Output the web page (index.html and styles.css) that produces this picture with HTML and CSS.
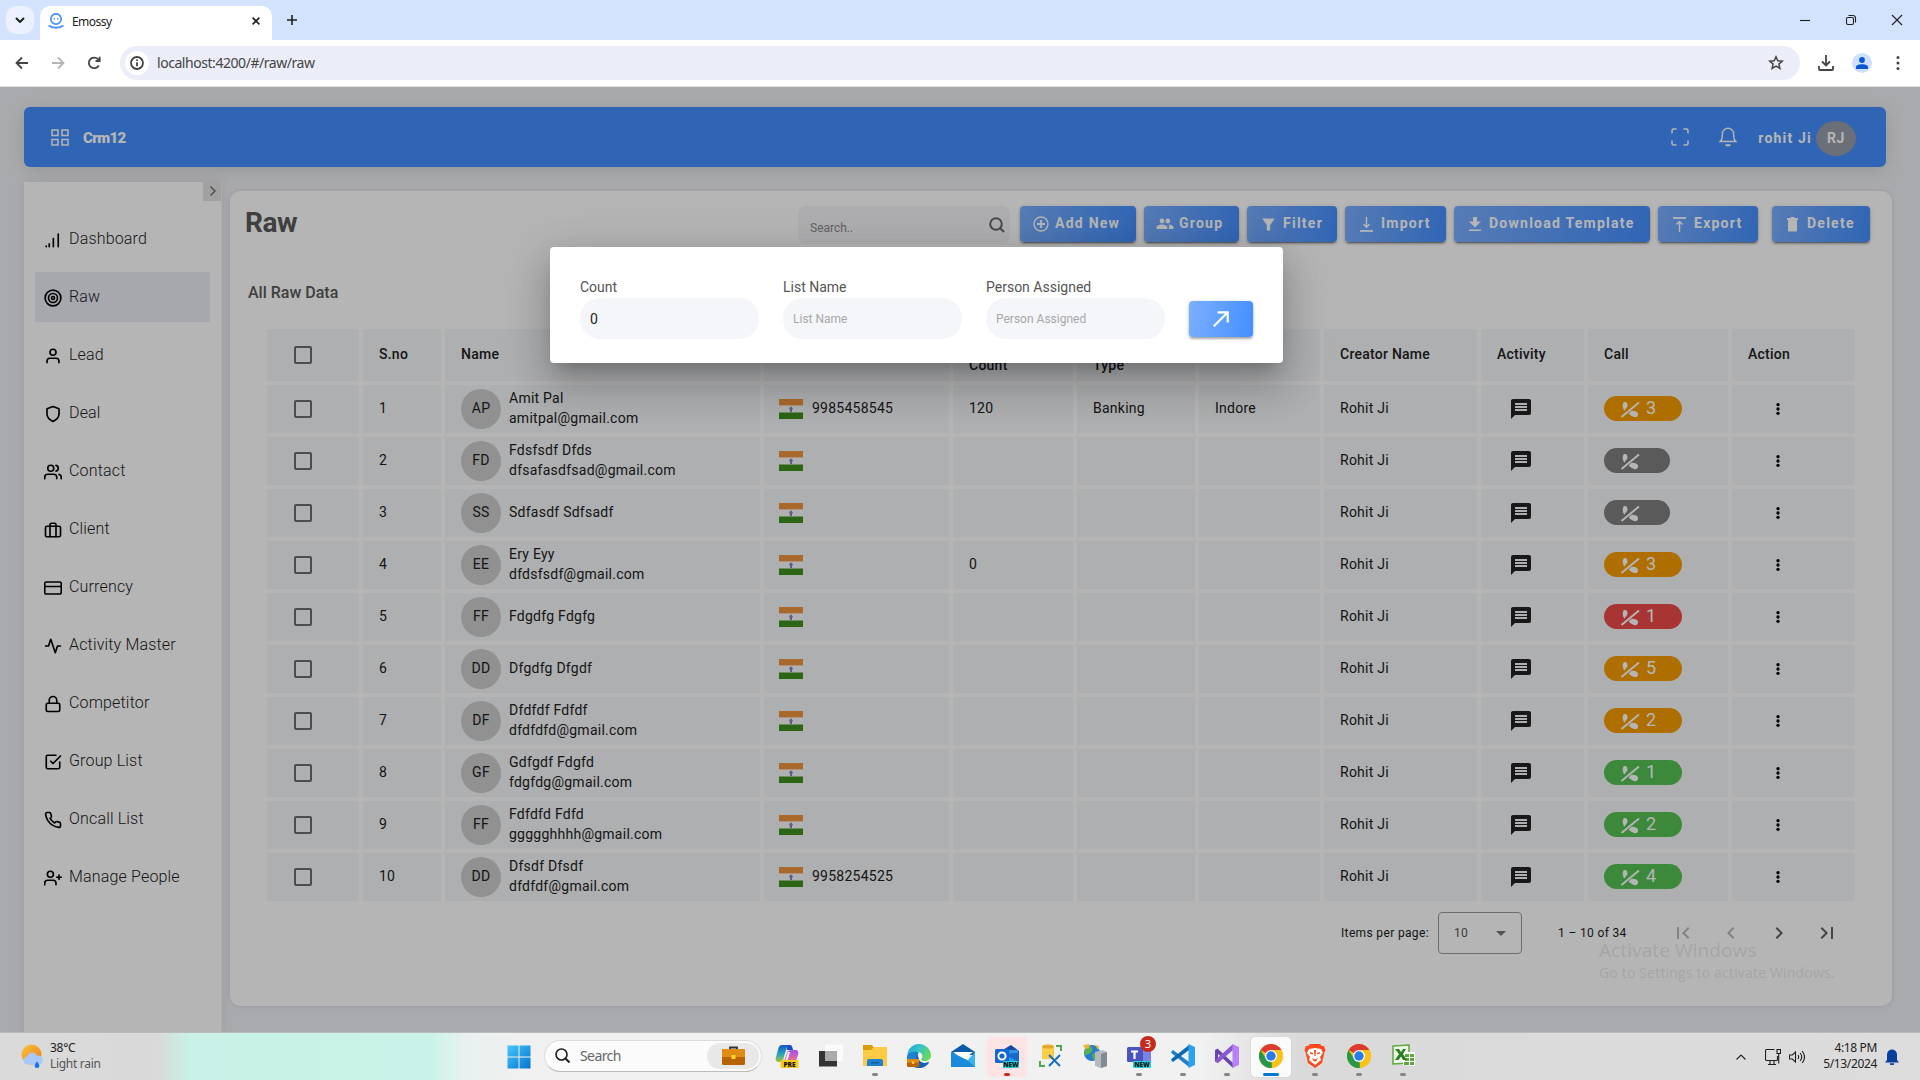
FILE: index.html
```html
<!DOCTYPE html>
<html lang="en">
<head>
<meta charset="utf-8">
<title>Emossy</title>
<link rel="stylesheet" href="styles.css">
</head>
<body>
<svg class="defs" width="0" height="0">
  <symbol id="flag" viewBox="0 0 24 20"><path fill="#f0953f" d="M0 0h24v6.500H0z"/><path fill="#fff" fill-opacity=".35" d="M0 6.500h24v7H0z"/><path fill="#3f8f1d" d="M0 13.500h24V20H0z"/><path fill="#8c80c8" d="M12 7.200l2 2.200-1 1.600v2h-2v-2l-1-1.600z"/></symbol>
  <symbol id="chat" viewBox="0 0 24 24"><path fill="#222" d="M20 2H4c-1.100 0-2 .9-2 2v18l4-4h14c1.100 0 2-.9 2-2V4c0-1.100-.9-2-2-2zM6 6h12v2H6zm0 3h12v2H6zM6 12h12v2H6z" fill-rule="evenodd"/></symbol>
  <symbol id="nocall" viewBox="0 0 20 18"><path fill="currentColor" d="M3.500 1.500c1.200-.6 2.500-.6 3.300.2.700.9.800 2.600.6 3.900L4.200 9.800C2.700 6.900 2 3.700 3.500 1.500zM8.700 12.600l2.400-2.600c2.400-.6 5.500.3 6.600 1.700.6 1.200.4 3-.5 3.900-2.600 1.500-6-.3-8.500-3z"/><path d="M1.500 16L19 1.500" stroke="currentColor" stroke-width="1.900"/></symbol>
  <symbol id="dots" viewBox="0 0 24 24"><circle cx="12" cy="5.500" r="2.500"/><circle cx="12" cy="12" r="2.500"/><circle cx="12" cy="18.500" r="2.500"/></symbol>
  <symbol id="chrome" viewBox="0 0 24 24"><circle cx="12" cy="12" r="12" fill="#fbc116"/><path fill="#de3b30" d="M12 12 1.600 6A12 12 0 0 1 22.400 6z"/><path fill="#279847" d="M12 12l1 11.950A12 12 0 0 1 1.600 6l5.600 9z"/><path fill="#fbc116" d="M12 6h10.400a12 12 0 0 1-10 18l5-9z"/><circle cx="12" cy="12" r="6" fill="#fff"/><circle cx="12" cy="12" r="4.700" fill="#2a7bea"/></symbol>
</svg>

<header class="tabstrip">
  <div class="tabsearch"><svg width="10" height="6" viewBox="0 0 10 6"><path class="ln w2" d="M1 1l4 4 4-4"/></svg></div>
  <div class="tab">
    <svg width="16" height="16" viewBox="0 0 16 16" fill="none" stroke="#4a93f5" stroke-width="1.700"><circle cx="8" cy="6" r="5.200"/><path stroke-width="2" d="M.5 12.500c4 3 11 3 15 0"/><path stroke-width="1.300" d="M6.200 5v1.500M9.800 5v1.500"/></svg>
    <span class="tab-title">Emossy</span>
    <svg width="8" height="8" viewBox="0 0 8 8"><path class="ln w15" d="M.6.600l6.800 6.800M7.400.600L.6 7.400"/></svg>
  </div>
  <svg class="newtab" width="12" height="12" viewBox="0 0 12 12"><path class="ln w15" d="M6 1v10M1 6h10"/></svg>
  <div class="wincontrols">
    <svg width="12" height="12" viewBox="0 0 12 12"><path class="ln" d="M1 6.500h10"/></svg>
    <svg width="12" height="12" viewBox="0 0 12 12"><rect class="ln" x="1.500" y="3.500" width="7" height="7" rx="1.500"/><path class="ln" d="M3.500 1.500h4.500a2.500 2.500 0 0 1 2.500 2.500v4.500"/></svg>
    <svg width="12" height="12" viewBox="0 0 12 12"><path class="ln" d="M1 1l10 10M11 1L1 11"/></svg>
  </div>
</header>

<div class="toolbar">
  <svg width="14" height="14" viewBox="0 0 14 14"><path class="ln dk" d="M13 7H2M7 1.500L1.500 7 7 12.500"/></svg>
  <svg width="14" height="14" viewBox="0 0 14 14"><path class="ln dim" d="M1 7h11M7 1.500L12.500 7 7 12.500"/></svg>
  <svg width="14" height="14" viewBox="0 0 14 14"><path class="ln dk" d="M11.800 9.500A5.300 5.300 0 1 1 11 3.200L12.500 5M12.700.8V5H8.500"/></svg>
  <div class="omnibox">
    <span class="siteinfo"><svg width="14" height="14" viewBox="0 0 14 14"><circle class="ln dk" cx="7" cy="7" r="6"/><path class="ln dk" d="M7 6.200v4M7 3.500v1.500"/></svg></span>
    <span class="url">localhost:4200/#/raw/raw</span>
    <svg width="16" height="16" viewBox="0 0 16 16"><path class="ln star" d="M8 1.800l1.800 4 4.400.4-3.300 2.900 1 4.300L8 11.200l-3.900 2.200 1-4.300L1.800 6.200l4.400-.4z"/></svg>
  </div>
  <svg width="16" height="16" viewBox="0 0 16 16"><path class="ln dk" d="M8 0v10M4 6.500L8 10.500l4-4M1 11v3a1 1 0 0 0 1 1h12a1 1 0 0 0 1-1v-3"/></svg>
  <span class="profile"><svg width="12" height="12" viewBox="0 0 12 12" fill="#0b57d0"><circle cx="6" cy="3" r="2.900"/><path d="M0 12v-1.800C0 8 3 7.200 6 7.200s6 .8 6 3V12z"/></svg></span>
  <svg width="4" height="14" viewBox="0 0 4 14" fill="#444"><circle cx="2" cy="1.600" r="1.500"/><circle cx="2" cy="7" r="1.500"/><circle cx="2" cy="12.400" r="1.500"/></svg>
</div>

<main class="app">
  <div class="topbar">
    <svg class="grid-icon" width="18" height="17" viewBox="0 0 18 17" fill="none" stroke="#fff" stroke-width="1.500"><path d="M1 1h6v5.500H1zM11 1h6v5.500h-6zM1 10.500h6V16H1zM11 10.500h6V16h-6z"/></svg>
    <span class="brand">Crm12</span>
    <svg class="full-icon" width="18" height="18" viewBox="0 0 18 18" fill="none" stroke="#fff" stroke-width="1.500"><path d="M1 5.500V2.500A1.500 1.500 0 0 1 2.500 1h3M12.500 1h3A1.500 1.500 0 0 1 17 2.500v3M17 12.500v3a1.500 1.500 0 0 1-1.500 1.500h-3M5.500 17h-3A1.500 1.500 0 0 1 1 15.500v-3"/></svg>
    <svg class="bell-icon" width="18" height="20" viewBox="0 0 18 20" fill="none" stroke="#fff" stroke-width="1.400"><path d="M1 14.500c1.500-1.200 2.300-2.700 2.300-5V7a5.700 5.700 0 0 1 11.400 0v2.500c0 2.300.8 3.800 2.300 5z"/><path stroke-width="2" d="M6.800 17.500c.8 1.200 3.600 1.200 4.400 0"/></svg>
    <span class="user">rohit Ji</span>
    <span class="user-avatar">RJ</span>
  </div>

  <div class="columns">
    <nav class="sidebar">
      <div class="collapse"><svg width="8" height="12" viewBox="0 0 8 12"><path class="ln gray" d="M1.500 1.500L6 6l-4.500 4.500"/></svg></div>
      <a class="nav"><svg viewBox="0 0 24 24"><path d="M19 21V4M12.500 21V10M7 21v-4M3 21v-1"/></svg>Dashboard</a>
      <a class="nav active"><svg viewBox="0 0 24 24"><circle cx="12" cy="12" r="10.500"/><circle cx="12" cy="12" r="6"/><circle cx="12" cy="12" r="2"/></svg>Raw</a>
      <a class="nav"><svg viewBox="0 0 24 24"><path d="M20 21v-2a4 4 0 0 0-4-4H8a4 4 0 0 0-4 4v2"/><circle cx="12" cy="7" r="4"/></svg>Lead</a>
      <a class="nav"><svg viewBox="0 0 24 24"><path d="M12 22s8-4 8-10V5l-8-3-8 3v7c0 6 8 10 8 10z"/></svg>Deal</a>
      <a class="nav"><svg viewBox="0 0 24 24"><path d="M17 21v-2a4 4 0 0 0-4-4H5a4 4 0 0 0-4 4v2M23 21v-2a4 4 0 0 0-3-3.870M16 3.130a4 4 0 0 1 0 7.750"/><circle cx="9" cy="7" r="4"/></svg>Contact</a>
      <a class="nav"><svg viewBox="0 0 24 24"><rect x="2" y="7" width="20" height="14" rx="2"/><path d="M16 21V5a2 2 0 0 0-2-2h-4a2 2 0 0 0-2 2v16"/></svg>Client</a>
      <a class="nav"><svg viewBox="0 0 24 24"><rect x="1" y="4" width="22" height="16" rx="2"/><path d="M1 10h22"/></svg>Currency</a>
      <a class="nav"><svg viewBox="0 0 24 24"><path d="M22 12h-4l-3 9L9 3l-3 9H2"/></svg>Activity Master</a>
      <a class="nav"><svg viewBox="0 0 24 24"><rect x="3" y="11" width="18" height="11" rx="2"/><path d="M7 11V7a5 5 0 0 1 10 0v4"/></svg>Competitor</a>
      <a class="nav"><svg viewBox="0 0 24 24"><path d="M9 11l3 3L22 4M21 12v7a2 2 0 0 1-2 2H5a2 2 0 0 1-2-2V5a2 2 0 0 1 2-2h11"/></svg>Group List</a>
      <a class="nav"><svg viewBox="0 0 24 24"><path d="M22 16.920v3a2 2 0 0 1-2.180 2 19.790 19.790 0 0 1-8.630-3.070 19.500 19.500 0 0 1-6-6 19.790 19.790 0 0 1-3.070-8.670A2 2 0 0 1 4.110 2h3a2 2 0 0 1 2 1.720c.13.960.36 1.900.7 2.810a2 2 0 0 1-.45 2.110L8.090 9.910a16 16 0 0 0 6 6l1.270-1.270a2 2 0 0 1 2.110-.45c.91.340 1.850.57 2.810.7A2 2 0 0 1 22 16.920z"/></svg>Oncall List</a>
      <a class="nav"><svg viewBox="0 0 24 24"><path d="M16 21v-2a4 4 0 0 0-4-4H5a4 4 0 0 0-4 4v2M20 8v6M23 11h-6"/><circle cx="8.500" cy="7" r="4"/></svg>Manage People</a>
    </nav>

    <section class="card">
      <div class="actions">
        <h1>Raw</h1>
        <label class="search"><span>Search..</span><svg width="16" height="16" viewBox="0 0 16 16"><circle class="ln s2" cx="7" cy="7" r="5.800"/><path class="ln s2" d="M11.200 11.200L15 15"/></svg></label>
        <button class="btn b-add"><svg width="16" height="16" viewBox="0 0 16 16" fill="none" stroke="#fff" stroke-width="1.400"><circle cx="8" cy="8" r="7"/><path stroke-width="1.900" d="M8 4v8M4 8h8"/></svg>Add New</button>
        <button class="btn b-group"><svg width="18" height="12" viewBox="0 0 18 12" fill="#fff"><circle cx="6" cy="3" r="2.400"/><circle cx="11.800" cy="3" r="2.400"/><path d="M.5 11V9.500c0-2 3-3 5.500-3s5.400 1 5.400 3V11zM12.800 11h4.700V9.500c0-1.900-2.700-2.900-5-3 .8.700 1.100 1.600.3 3z"/></svg>Group</button>
        <button class="btn b-filter"><svg width="13" height="13" viewBox="0 0 13 13" fill="#fff"><path d="M.3.500h12.400L8.200 7v5.500H4.800V7z"/></svg>Filter</button>
        <button class="btn b-import"><svg width="13" height="15" viewBox="0 0 13 15" fill="none" stroke="#fff"><path stroke-width="1.500" d="M6.500 0v10M3.500 7.300l3 3 3-3"/><path stroke-width="1.800" d="M0 14h13"/></svg>Import</button>
        <button class="btn b-dl"><svg width="12" height="14" viewBox="0 0 12 14" fill="#fff"><path d="M4 0h4v4.500h4L6 10.500 0 4.500h4zM0 12.500h12V14H0z"/></svg>Download Template</button>
        <button class="btn b-export"><svg width="13" height="15" viewBox="0 0 13 15" fill="none" stroke="#fff"><path stroke-width="1.500" d="M6.500 15V4.500M3.500 7.500l3-3 3 3"/><path stroke-width="1.800" d="M0 1h13"/></svg>Export</button>
        <button class="btn b-del"><svg width="11" height="15" viewBox="0 0 11 15" fill="#fff"><path d="M0 1h3l1-1h3l1 1h3v2H0zM1 3h9v10.500a1 1 0 0 1-1 1H2a1 1 0 0 1-1-1z"/></svg>Delete</button>
      </div>
      <h2>All Raw Data</h2>
      <div class="table" id="table">
        <div class="row head">
          <div class="check"><i></i></div><div>S.no</div><div>Name</div><div></div><div class="two"><br>Count</div><div class="two"><br>Type</div><div></div><div>Creator Name</div><div>Activity</div><div>Call</div><div>Action</div>
        </div>
      </div>
      <div class="pager">
        <span class="ipp">Items per page:</span>
        <span class="select">10<svg width="10" height="5" viewBox="0 0 10 5"><path fill="#757575" d="M0 0h10L5 5z"/></svg></span>
        <span class="range">1 – 10 of 34</span>
        <svg class="off" viewBox="0 0 24 24"><path d="M18.410 16.590L13.820 12l4.590-4.590L17 6l-6 6 6 6zM6 6h2v12H6z"/></svg>
        <svg class="off" viewBox="0 0 24 24"><path d="M15.410 7.410L14 6l-6 6 6 6 1.410-1.410L10.830 12z"/></svg>
        <svg viewBox="0 0 24 24"><path d="M10 6L8.590 7.410 13.170 12l-4.580 4.590L10 18l6-6z"/></svg>
        <svg viewBox="0 0 24 24"><path d="M5.590 7.410L10.180 12l-4.590 4.590L7 18l6-6-6-6zM16 6h2v12h-2z"/></svg>
      </div>
    </section>
  </div>
  <div class="backdrop"></div>
  <form class="dialog">
    <label>Count<span class="field filled">0</span></label>
    <label>List Name<span class="field">List Name</span></label>
    <label>Person Assigned<span class="field">Person Assigned</span></label>
    <span class="go"><svg width="16" height="16" viewBox="0 0 16 16" fill="none" stroke="#fff" stroke-width="2.200"><path d="M.8 15.200L14.500 1.500M4.500 1.300h10.200v10.200"/></svg></span>
  </form>
  <div class="watermark"><b>Activate Windows</b><span>Go to Settings to activate Windows.</span></div>
</main>

<footer class="taskbar">
  <div class="weather">
    <svg width="23" height="25" viewBox="0 0 23 25"><defs><linearGradient id="sun" x2="1" y2="1"><stop stop-color="#f8c440"/><stop offset="1" stop-color="#f07a10"/></linearGradient></defs><circle cx="10.500" cy="10.500" r="10" fill="url(#sun)"/><path fill="#a9c8f8" d="M7 20.500a4 4 0 0 1-.5-8 5 5 0 0 1 9.500-.8 4.500 4.500 0 0 1 2.500 8.800z"/><path fill="#1873e8" d="M16 17.500c3 3.500 3.200 6.500 0 6.500s-3-3 0-6.500z"/></svg>
    <div><b>38°C</b><span>Light rain</span></div>
  </div>
  <div class="tasks">
    <svg class="start" width="24" height="24" viewBox="0 0 24 24" fill="url(#win)"><defs><linearGradient id="win" gradientUnits="userSpaceOnUse" x2="24" y2="24"><stop stop-color="#48c8fb"/><stop offset="1" stop-color="#0372d0"/></linearGradient></defs><path d="M.5.500h11v11H.5zM12.500.500h11v11h-11zM.5 12.500h11v11H.5zM12.500 12.500h11v11h-11z"/></svg>
    <div class="tsearch"><svg width="15" height="15" viewBox="0 0 15 15"><circle class="ln w15" cx="6.500" cy="6.500" r="5.500"/><path class="ln w2" d="M10.500 10.500l4 4"/></svg><span>Search</span><i><svg width="23" height="19" viewBox="0 0 23 19"><path fill="none" stroke="#333" stroke-width="1.800" d="M8 4V1.500h7V4"/><rect y="3" width="23" height="16" rx="1.500" fill="#b86206"/><path fill="#e08c12" d="M0 4.500A1.500 1.500 0 0 1 1.500 3h20A1.500 1.500 0 0 1 23 4.500V11H0z"/><path fill="#ffd52a" d="M9.500 9h4v4h-4z"/></svg></i></div>
    <div class="tk"><svg viewBox="0 0 24 24"><defs><linearGradient id="cpa" x2="0" y2="1"><stop stop-color="#1558c8"/><stop offset=".5" stop-color="#24a0c0"/><stop offset="1" stop-color="#9fc63c"/></linearGradient><linearGradient id="cpb" x2="0" y2="1"><stop stop-color="#a050f0"/><stop offset="1" stop-color="#f4708c"/></linearGradient></defs><path fill="#1a4fc0" d="M11 1h4c2 0 2.500 2 3 5h-6z"/><path fill="url(#cpa)" d="M7 1h7c-2 1-2.500 3-3 5L8 16c-.6 1.500-1.500 2-3 2H4c-3 0-4-2-3-5l2.500-9C4 2 5 1 7 1z"/><path fill="url(#cpb)" d="M17 6h3c3 0 4 2 3 5l-2 6H9l3-8c.6-2 2-3 5-3z"/><path fill="#fff" d="M13 8l2 0-2.500 8h-2z"/><rect x="5.500" y="16" width="18" height="8" rx="1.500" fill="#fbc917"/><text x="14.500" y="22.600" text-anchor="middle" class="tag">PRE</text></svg></div>
    <div class="tk"><svg viewBox="0 0 24 24"><path fill="#333" d="M0 7h18v15.500H0z"/><path fill="#fff" fill-opacity=".75" d="M6 .5h18V17H6z"/><path fill="#aaa" d="M6 7h12v10H6z"/></svg></div>
    <div class="tk run"><svg viewBox="0 0 24 24"><path fill="#dd9a0c" d="M0 1h9l2 3v4H0z"/><path fill="#fccb45" d="M0 6h8l3-3h13v19H0z"/><path fill="#1f7fd0" d="M4 22v-5a2 2 0 0 1 2-2h12a2 2 0 0 1 2 2v5z"/><path fill="#0d5ca8" d="M8 18h8v1.500H8z"/></svg></div>
    <div class="tk"><svg viewBox="0 0 24 24"><defs><linearGradient id="edg" y1="0" x2="1" y2=".5"><stop stop-color="#1aa0e0"/><stop offset=".5" stop-color="#35c4c8"/><stop offset="1" stop-color="#66d85c"/></linearGradient></defs><path fill="#1560b0" d="M0 12a12 12 0 0 0 19 9.800c2-1.300 3-3 3-4-5 2.500-10 .5-10.500-4L10 8z"/><path fill="#1b80cf" d="M0 12C2 6 9 5 12 9c-4 2-3 9 1 12L8 23.300A12 12 0 0 1 0 12z"/><path fill="url(#edg)" d="M.2 10A12 12 0 0 1 24 11c0 4-3 6-6.500 6-3 0-3.500-1-3-2 2.500-3 0-7.500-5-7.500C5 7.500 1.500 9 .2 10z"/><rect y="15" width="12" height="8" rx="1" fill="#b86206"/><path fill="#e08c12" d="M0 15h12v3.500H0z"/><path fill="#ffd52a" d="M5 17.500h2.200v2.300H5z"/></svg></div>
    <div class="tk"><svg viewBox="0 0 24 24"><path fill="#0a5ca8" d="M0 8L12 0l12 8v3H0z"/><path fill="#fff" d="M2 8h20l-10 8z"/><path fill="#39b6ee" d="M0 8l16 9 8-9v15H0z"/><path fill="#1a8ada" d="M0 8l16 8 8 7H0z"/></svg></div>
    <div class="tk run red"><svg viewBox="0 0 24 24"><path fill="#0f4fa8" d="M6 7l10-6 8 6v9H6z"/><path fill="#2b97e6" d="M8 6h15v12H8z"/><path fill="#1668cc" d="M8 10l16 8V9z"/><rect y="5" width="14" height="14" rx="1.500" fill="#1368d0"/><circle cx="7" cy="12" r="3.600" fill="none" stroke="#fff" stroke-width="2"/><rect x="8" y="17" width="16" height="7" rx="1" fill="#21d3d8"/><text x="16" y="22.900" text-anchor="middle" class="tag">NEW</text></svg></div>
    <div class="tk"><svg viewBox="0 0 24 24"><path fill="#f8cd48" d="M3 2h12v13H3z"/><ellipse cx="9" cy="2.500" rx="6" ry="2" fill="#e6a430"/><path fill="none" stroke="#4aa84c" stroke-width="2" d="M17 2h5v5M1 17v5h5"/><path stroke="#1c6fb8" stroke-width="2" d="M10 11l11 11M21 11L10 22"/></svg></div>
    <div class="tk"><svg viewBox="0 0 24 24"><circle cx="9" cy="9" r="8" fill="#2b7cd0"/><path fill="#57b04a" d="M4 3c4-2 6 1 5 4s-5 3-7 5c-1-4 0-7 2-9zm6 6c3 0 4 3 2 7-3-1-3-4-2-7z"/><path fill="#e8b93c" d="M0 1l6-1v4L2 5zM12 1l4 1-1 4z"/><path fill="#b4bac0" d="M12 8l8-2 4 2v14l-6 2-6-2z"/><path fill="#828a92" d="M18 10l6-2v14l-6 2z"/></svg></div>
    <div class="tk run"><svg viewBox="0 0 24 24"><path fill="#7b83eb" d="M12 6h12v10c0 4-3 6-6 6h-6z"/><circle cx="19" cy="3" r="3" fill="#7b83eb"/><rect y="3" width="16" height="15" rx="1.500" fill="#4b53bc"/><path fill="#fff" d="M4 6.500h7v2H8.600V15H6.400V8.500H4z"/><rect x="6" y="17" width="18" height="7" rx="1" fill="#21d3d8"/><text x="15" y="22.900" text-anchor="middle" class="tag">NEW</text></svg><em>3</em></div>
    <div class="tk run"><svg viewBox="0 0 24 24"><path fill="#1f7fca" d="M0 8l2-2 16 12v5L1 9.500z"/><path fill="#0f67ae" d="M0 16l2 2L18 6V1L1 14.500z"/><path fill="#2aa2f0" d="M17.500 0L24 3v18l-6.500 3z"/></svg></div>
    <div class="tk run"><svg viewBox="0 0 24 24"><path fill="#6a45ac" d="M0 6l3-1.500V19L0 17.500z"/><path fill="#6a45ac" d="M0 6.500L3 5l15 14v5L1.500 8.500z"/><path fill="#8a58d0" d="M0 17.500L3 19 18 6V0L1.500 15z"/><path fill="#b882f4" d="M17.500 0L24 3v18l-6.500 3z"/></svg></div>
    <div class="tk run current"><svg><use href="#chrome"/></svg></div>
    <div class="tk run"><svg viewBox="0 0 24 24"><path fill="#fb4a1e" d="M7 0h10l2 2h2l1.500 4-1 2L19 19l-7 5-7-5L2.500 8l-1-2L3 2h2z"/><path fill="#fff" d="M6 5l6-1 6 1 2 4-3 4 1 3-6 5-6-5 1-3-3-4z"/><path fill="#fb4a1e" d="M7 8l3 1v1.500L7 9.500zM17 8l-3 1v1.500l3-1zM9 14l3 1.500 3-1.500-2 3.500h-2zM11 6h2l-.5 6h-1z"/></svg></div>
    <div class="tk run"><svg><use href="#chrome"/></svg></div>
    <div class="tk run"><svg viewBox="0 0 24 24"><path fill="#eef6ea" stroke="#5aa83c" stroke-width="1.500" d="M2 2l16-1v18L2 20z"/><path fill="#fff" d="M12 8h12v14l-12-1z"/><path fill="#5aa83c" d="M14 10h4v3h-4zM19 10h4v3h-4zM14 14h4v3h-4zM19 14h4v3h-4zM13 18h5v3h-5zM19 18h4v3h-4z"/><path fill="#2c7d24" d="M4 5h4l2 3 2-3h3l-3 5 4 6h-4l-2-3.500L7.500 16H4l4-6z"/></svg></div>
  </div>
  <div class="tray">
    <svg width="10" height="6" viewBox="0 0 10 6"><path class="ln" d="M.5 5.500L5 1l4.500 4.500"/></svg>
    <svg class="net" width="16" height="17" viewBox="0 0 16 17"><path class="ln" d="M9.500 1.500H1.500a1 1 0 0 0-1 1v9a1 1 0 0 0 1 1h10a1 1 0 0 0 1-1V8M5 13v3M9 13v3M3 16.500h8M12 1.500h3.500v4H12zM13.700 5.500v10"/></svg>
    <svg class="vol" width="16" height="14" viewBox="0 0 16 14"><path class="ln" d="M.5 5h2.800L6.500 2v10L3.300 9H.5zM9 5c.8 1.200.8 2.800 0 4M11.200 3c1.800 2.400 1.800 5.600 0 8M13.200 1c2.800 3.600 2.800 8.400 0 12"/></svg>
    <div class="clock"><span>4:18 PM</span><span>5/13/2024</span></div>
    <svg class="tbell" width="14" height="16" viewBox="0 0 14 16" fill="#063f9c"><path d="M2 11V5.500a5 5 0 0 1 10 0V11l2 2.500H0zM4.800 14.200h4.400a2.200 2.200 0 0 1-4.400 0z"/></svg>
  </div>
</footer>
<script src="rows.js"></script>
</body>
</html>
```
FILE: rows.js
```js
const people = [
  ['AP', 'Amit Pal', 'amitpal@gmail.com', '9985458545', '120', 'Banking', 'Indore', 'orange', '3'],
  ['FD', 'Fdsfsdf Dfds', 'dfsafasdfsad@gmail.com', '', '', '', '', 'grey', ''],
  ['SS', 'Sdfasdf Sdfsadf', '', '', '', '', '', 'grey', ''],
  ['EE', 'Ery Eyy', 'dfdsfsdf@gmail.com', '', '0', '', '', 'orange', '3'],
  ['FF', 'Fdgdfg Fdgfg', '', '', '', '', '', 'red', '1'],
  ['DD', 'Dfgdfg Dfgdf', '', '', '', '', '', 'orange', '5'],
  ['DF', 'Dfdfdf Fdfdf', 'dfdfdfd@gmail.com', '', '', '', '', 'orange', '2'],
  ['GF', 'Gdfgdf Fdgfd', 'fdgfdg@gmail.com', '', '', '', '', 'green', '1'],
  ['FF', 'Fdfdfd Fdfd', 'ggggghhhh@gmail.com', '', '', '', '', 'green', '2'],
  ['DD', 'Dfsdf Dfsdf', 'dfdfdf@gmail.com', '9958254525', '', '', '', 'green', '4']
];
document.getElementById('table').insertAdjacentHTML('beforeend', people.map((p, i) => `
  <div class="row">
    <div class="check"><i></i></div>
    <div>${i + 1}</div>
    <div class="person"><span class="avatar">${p[0]}</span><span>${p[1]}${p[2] ? '<br>' + p[2] : ''}</span></div>
    <div class="phone"><svg width="24" height="20"><use href="#flag"/></svg>${p[3]}</div>
    <div>${p[4]}</div><div>${p[5]}</div><div>${p[6]}</div>
    <div>Rohit Ji</div>
    <div class="activity"><svg width="24" height="24"><use href="#chat"/></svg></div>
    <div><span class="pill ${p[7]}"><svg width="20" height="18"><use href="#nocall"/></svg><b>${p[8]}</b></span></div>
    <div class="more"><svg width="16" height="16"><use href="#dots"/></svg></div>
  </div>`).join(''));
```
FILE: styles.css
```css
* { box-sizing: border-box; }
body { margin: 0; width: 1920px; height: 1080px; overflow: hidden; display: flex; flex-direction: column; font-family: Roboto, "Liberation Sans", sans-serif; font-size: 14px; color: #212121; }
svg { display: block; flex: none; }
.defs { position: absolute; }
.ln { fill: none; stroke: #1f1f1f; stroke-width: 1.1; }
.w15 { stroke-width: 1.6; }
.w2 { stroke-width: 2; }
.s2 { stroke: #666; stroke-width: 2; }
.star { stroke: #444; stroke-width: 1.5; }
.dk { stroke: #444; stroke-width: 1.8; }
.dim { stroke: #b5b5b5; stroke-width: 1.8; }
.gray { stroke: #777; stroke-width: 1.6; }

.tabstrip { height: 40px; flex: none; background: #d3e3fd; display: flex; align-items: center; padding-left: 6px; font-family: "Noto Sans", sans-serif; }
.tabsearch { width: 28px; height: 28px; border-radius: 10px; background: #ebf2fe; display: grid; place-items: center; margin-right: 6px; }
.tab { width: 232px; height: 34px; align-self: flex-end; background: #fff; border-radius: 10px 10px 0 0; display: flex; align-items: center; padding: 0 12px 4px 8px; }
.tab-title { font-size: 12px; letter-spacing: -0.55px; margin-left: 8px; padding-top: 1px; flex: 1; }
.newtab { margin-left: 14px; }
.wincontrols { margin-left: auto; display: flex; gap: 34px; padding-right: 17px; }

.toolbar { height: 47px; flex: none; background: #fff; border-bottom: 1px solid #e0e0e0; display: flex; align-items: center; padding: 0 20px 0 15px; }
.toolbar > svg:nth-child(1) { margin-right: 22px; }
.toolbar > svg:nth-child(2) { margin-right: 22px; }
.toolbar > svg:nth-child(3) { margin-right: 19px; }
.omnibox { width: 1680px; height: 34px; border-radius: 17px; background: #ebeef8; display: flex; align-items: center; padding: 0 16px 0 5px; margin-right: 18px; }
.siteinfo { width: 24px; height: 24px; border-radius: 50%; background: #fff; display: grid; place-items: center; }
.url { flex: 1; margin-left: 8px; font: 14px "Noto Sans", sans-serif; letter-spacing: -0.45px; color: #444; padding-bottom: 1px; }
.profile { width: 20px; height: 20px; border-radius: 50%; background: #cfe0fc; display: grid; place-items: center; margin: 0 24px 0 18px; }

.app { position: relative; flex: none; height: 945px; background: #eff0f4; overflow: hidden; }
.topbar { margin: 20px 34px 0 24px; height: 60px; border-radius: 6px; background: #448fff; box-shadow: 0 3px 18px rgba(0,0,0,.12); color: #fff; display: flex; align-items: center; padding: 0 30px 0 27px; }
.brand { margin-left: 14px; font-size: 15px; font-weight: 900; letter-spacing: -0.65px; padding-top: 1px; }
.full-icon { margin-left: auto; margin-right: 30px; }
.bell-icon { margin-right: 21px; }
.user { font-size: 14px; font-weight: 700; letter-spacing: 1.2px; margin-right: 4px; padding-top: 1px; }
.user-avatar { width: 40px; height: 35px; border-radius: 50%; background: #969daa; display: grid; place-items: center; font-weight: 700; letter-spacing: .5px; margin-top: 2px; }

.columns { display: flex; align-items: flex-start; padding: 15px 28px 0 24px; }
.sidebar { width: 198px; height: 850px; background: #fff; border-right: 1px solid #f6f6f6; padding: 0 11px; box-shadow: 0 0 10px rgba(120,120,160,.18); }
.collapse { width: 18px; height: 19px; margin: 0 -11px 13px auto; background: #e3e3e3; display: grid; place-items: center; padding: 0 0 1px 2px; }
.nav { height: 50px; margin-bottom: 8px; display: flex; align-items: center; gap: 7px; padding: 0 0 2px 9px; font-size: 16px; font-weight: 300; color: #222; letter-spacing: .17px; }
.nav svg { width: 18px; height: 18px; margin-top: 4px; fill: none; stroke: #000; stroke-width: 2.2; stroke-linecap: round; stroke-linejoin: round; }
.active { background: #ebedf5; }

.card { width: 1662px; height: 815px; margin: 9px 0 0 8px; background: #fff; border-radius: 10px; box-shadow: 0 0 4px rgba(120,120,170,.25); padding: 15px 22px 0 15px; }
.actions { display: flex; align-items: flex-start; height: 37px; }
h1 { margin: 5px auto 0 0; font-size: 28px; line-height: 24px; font-weight: 700; letter-spacing: -0.4px; color: #595959; }
.search { width: 212px; height: 38px; margin-right: 10px; border-radius: 8px; background: #f5f6f9; display: flex; align-items: center; justify-content: space-between; padding: 0 5px 0 12px; font-size: 12px; color: #8b8b8b; }
.search span { padding-top: 5px; }
.btn { height: 36px; flex: none; margin: 0 8px 0 0; padding: 0 0 3px 15px; border: 0; border-radius: 4px; background: linear-gradient(100deg, #7bafff, #448fff); box-shadow: 0 3px 1px -2px rgba(0,0,0,.3), 0 2px 2px rgba(0,0,0,.2), 0 1px 4px rgba(0,0,0,.16); color: #fff; display: flex; align-items: center; gap: 8px; font: 700 14px Roboto, sans-serif; letter-spacing: 1.25px; white-space: nowrap; }
.btn svg { margin-top: 3px; }
.b-add { width: 116px; padding-left: 13px; gap: 6px; }
.b-group { width: 95px; padding-left: 12px; gap: 5px; }
.b-filter { width: 90px; }
.b-import { width: 101px; }
.b-dl { width: 196px; }
.b-export { width: 100px; }
.b-del { width: 98px; margin-left: 6px; margin-right: 0; gap: 9px; }
h2 { margin: 40px 0 0 3px; font-size: 16px; line-height: 20px; font-weight: 500; color: #595959; }

.table { margin: 26px 0 0 22px; display: grid; row-gap: 4px; }
.row { display: grid; grid-template-columns: 92px 78px 315px 185px 120px 118px 121px 153px 103px 140px 123px; column-gap: 4px; height: 48px; letter-spacing: .25px; }
.row > div { background: #f5f7fa; padding: 0 0 2px 16px; display: flex; align-items: center; line-height: 20px; }
.head { height: 52px; font-weight: 500; }
.row > .two { display: block; line-height: 22px; padding-top: 3px; }
.row > .check { padding: 0 0 0 27px; }
.check i { width: 18px; height: 18px; border: 2px solid #6b6b6b; border-radius: 2px; }
.row > .person { padding: 0 0 0 16px; gap: 8px; }
.person > span:last-child { padding-bottom: 2px; }
.avatar { width: 40px; height: 40px; border-radius: 50%; background: #ccc; display: grid; place-items: center; padding-bottom: 2px; }
.row > .phone { gap: 9px; padding-left: 15px; }
.phone svg { margin-top: 2px; }
.row > .activity { padding: 0 0 0 28px; }
.pill { min-width: 66px; height: 25px; border-radius: 13px; background: #7f7f7f; color: #fff; display: flex; align-items: center; gap: 6px; padding: 0 0 0 16px; font-size: 18px; margin-top: 1px; }
.pill b { font-weight: 400; padding-bottom: 1px; }
.pill svg { margin-top: 2px; }
.orange { background: #f59c00; width: 78px; }
.red { background: #ee4a4a; width: 78px; }
.green { background: #55c155; width: 78px; }
.row > .more { padding: 0 0 0 38px; }

.pager { display: flex; align-items: center; height: 64px; margin-left: 1096px; font-size: 12px; letter-spacing: .35px; }
.ipp { width: 97px; }
.select { width: 84px; height: 42px; border: 1px solid #999; border-radius: 4px; display: flex; align-items: center; justify-content: space-between; padding: 0 15px 0 15px; color: #555; margin-right: 36px; }
.range { width: 113px; }
.pager > svg { width: 24px; height: 24px; margin-right: 24px; fill: #626262; }
.pager > .off { fill: #b9b9b9; }

.backdrop { position: absolute; inset: 0; background: rgba(0,0,0,.29); }
.dialog { position: absolute; left: 550px; top: 160px; width: 733px; height: 116px; background: #fff; border-radius: 4px; box-shadow: 0 11px 15px -7px rgba(0,0,0,.2), 0 24px 38px 3px rgba(0,0,0,.14), 0 9px 46px 8px rgba(0,0,0,.12); display: flex; gap: 24px; padding: 30px 30px 0; color: #555; line-height: 20px; }
.field { display: flex; align-items: center; width: 179px; height: 41px; margin-top: 1px; border-radius: 20px; background: #f4f6fa; color: #a8a8a8; font-size: 12px; padding-left: 10px; }
.filled { color: #222; font-size: 14px; }
.go { width: 64px; height: 36px; margin-top: 24px; border-radius: 4px; background: linear-gradient(100deg, #7bafff, #448fff); box-shadow: 0 2px 2px rgba(0,0,0,.25), 0 1px 4px rgba(0,0,0,.16); display: grid; place-items: center; }
.watermark { position: absolute; left: 1599px; top: 849px; color: #a5a5a7; font-family: "Open Sans", sans-serif; display: grid; white-space: nowrap; }
.watermark b { font-weight: 400; font-size: 19px; line-height: 28px; letter-spacing: .1px; }
.watermark span { font-size: 14px; line-height: 18px; letter-spacing: .18px; }

.taskbar { flex: 1; border-top: 1px solid #bbb; display: flex; font-family: "Noto Sans", sans-serif; font-size: 12px; line-height: 16px; color: #222; background: linear-gradient(90deg, #dadada 0, #d8d9d8 155px, #c9f1e7 190px, #c9f3e8 430px, #e9f1f0 465px, #f0f0f0 520px, #f1f1f1 1200px, #dadada 1300px, #dcdcdc); }
.weather { width: 500px; display: flex; align-items: center; gap: 6px; padding: 0 0 1px 21px; }
.weather div { display: grid; letter-spacing: -0.3px; }
.weather b { font-weight: 400; }
.weather span { color: #555; }
.tasks { display: flex; align-items: center; padding-left: 7px; width: 1236px; }
.start { margin-right: 13px; }
.tsearch { width: 218px; height: 32px; border-radius: 16px; background: #fbfbfb; border: 1px solid #ddd; border-bottom-color: #bbb; display: flex; align-items: center; padding: 0 2px 0 10px; margin: 0 5px 2px 0; font-size: 14px; color: #666; }
.tsearch span { margin-left: 10px; letter-spacing: -0.6px; flex: 1; }
.tsearch i { width: 52px; height: 26px; border-radius: 13px; background: #e8e8e8; display: grid; place-items: center; }
.tk { position: relative; width: 40px; height: 40px; margin-right: 4px; border-radius: 4px; display: grid; place-items: center; padding-bottom: 1px; }
.tk svg { width: 24px; height: 24px; }
.tag { font: 800 6.500px "Open Sans", sans-serif; fill: #111; }
.run::after { content: ""; position: absolute; left: 17px; bottom: 1px; width: 6px; height: 3px; border-radius: 2px; background: #858585; }
.tk.red { width: 40px; background: #fde3e4; }
.red::after { background: #c42b1c; }
.current { background: #fafafa; box-shadow: 0 0 1px #999; }
.current::after { width: 16px; left: 12px; background: #0078d4; }
.tk em { position: absolute; right: 3px; top: -1px; width: 16px; height: 16px; border-radius: 50%; background: #c42b1c; color: #fff; font-style: normal; text-align: center; font-size: 11px; line-height: 16px; }
.tray { display: flex; align-items: center; }
.net { margin-left: 19px; }
.vol { margin-left: 8px; }
.clock { display: grid; text-align: right; width: 72px; padding-bottom: 1px; letter-spacing: -0.35px; }
.tbell { margin-left: 8px; }
```
